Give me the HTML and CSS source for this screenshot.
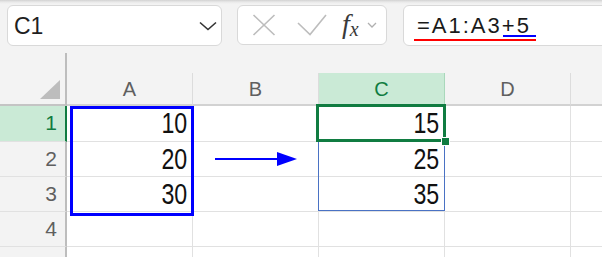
FILE: index.html
```html
<!DOCTYPE html>
<html>
<head>
<meta charset="utf-8">
<link rel="stylesheet" href="styles.css">
</head>
<body>
<div class="toolbar">
  <div class="namebox">
    <span class="name">C1</span>
    <svg class="chev" width="18" height="10" viewBox="0 0 18 10"><path d="M1 1.5 L9 8.5 L17 1.5" fill="none" stroke="#333" stroke-width="1.6"/></svg>
  </div>
  <div class="fxbox">
    <svg class="icon-x" width="24" height="22" viewBox="0 0 24 22"><path d="M1.5 1 L22.5 21 M22.5 1 L1.5 21" stroke="#bdbdbd" stroke-width="1.6" fill="none"/></svg>
    <svg class="icon-check" width="30" height="22" viewBox="0 0 30 22"><path d="M1 9 L13 20.5 L29 1" stroke="#bdbdbd" stroke-width="1.6" fill="none"/></svg>
    <span class="fx"><i>f</i><i class="sub">x</i></span>
    <svg class="chev-small" width="10" height="6" viewBox="0 0 10 6"><path d="M1 1 L5 5 L9 1" fill="none" stroke="#b0b0b0" stroke-width="1.3"/></svg>
  </div>
  <div class="formula">
    <span class="ftext">=A1:A3+5</span>
    <div class="uline red"></div>
    <div class="uline blue"></div>
  </div>
</div>
<div class="sheet">
  <div class="rh spacer"></div>
  <div class="gap"></div>

  <div class="corner"><div class="tri"></div></div>
  <div class="ch">A</div>
  <div class="ch">B</div>
  <div class="ch sel">C</div>
  <div class="ch">D</div>
  <div class="ch last"></div>

  <div class="rh sel">1</div>
  <div class="cell"><span class="num">10</span></div>
  <div class="cell"></div>
  <div class="cell"><span class="num">15</span></div>
  <div class="cell"></div>
  <div class="cell last"></div>

  <div class="rh">2</div>
  <div class="cell"><span class="num">20</span></div>
  <div class="cell"></div>
  <div class="cell"><span class="num">25</span></div>
  <div class="cell"></div>
  <div class="cell last"></div>

  <div class="rh">3</div>
  <div class="cell"><span class="num">30</span></div>
  <div class="cell"></div>
  <div class="cell"><span class="num">35</span></div>
  <div class="cell"></div>
  <div class="cell last"></div>

  <div class="rh">4</div>
  <div class="cell"></div>
  <div class="cell"></div>
  <div class="cell"></div>
  <div class="cell"></div>
  <div class="cell last"></div>

  <div class="rh">5</div>
  <div class="cell"></div>
  <div class="cell"></div>
  <div class="cell"></div>
  <div class="cell"></div>
  <div class="cell last"></div>

  <div class="range-a"></div>
  <div class="range-c"></div>
  <div class="selection"></div>
  <div class="handle"></div>
  <svg class="arrow" width="90" height="20" viewBox="0 0 90 20"><path d="M0 8 L64 8" stroke="#0000ff" stroke-width="2.2"/><path d="M62 1 L82 8 L62 15 Z" fill="#0000ff"/></svg>
</div>
</body>
</html>
```
FILE: styles.css
```css
* { box-sizing: border-box; }
html, body { margin: 0; padding: 0; }
body {
  background: #f3f3f3;
  width: 602px;
  height: 257px;
  overflow: hidden;
  font-family: "Liberation Sans", Arial, sans-serif;
}
.toolbar {
  height: 53px;
  display: flex;
  align-items: flex-start;
  padding: 5px 0 0 7px;
  gap: 15px;
  overflow: hidden;
  background: linear-gradient(#d2d2d2 0px, #e9e9e9 2px, #f3f3f3 4px);
}
.namebox {
  width: 215px;
  height: 41px;
  background: #fff;
  border: 1px solid #d9d9d9;
  border-radius: 6px;
  display: flex;
  align-items: center;
  justify-content: space-between;
  padding: 0 4px 0 6px;
}
.name {
  font-size: 23px;
  color: #1f1f1f;
  padding-top: 1px;
}
.chev { margin-top: 1px; }
.fxbox {
  width: 150px;
  height: 40px;
  background: #fff;
  border: 1px solid #d9d9d9;
  border-radius: 6px;
  display: flex;
  align-items: center;
  padding: 0 0 0 14px;
}
.icon-check { margin-left: 21px; margin-top: -1px; }
.fx {
  margin-left: 15px;
  font-family: "Liberation Serif", serif;
  font-size: 28px;
  color: #3a3a3a;
  display: flex;
  align-items: baseline;
  margin-top: -3px;
}
.fx .sub { font-size: 20px; margin-left: 0; position: relative; top: 3px; }
.chev-small { margin-left: 8px; margin-top: 0; }
.formula {
  position: relative;
  flex: 1;
  height: 41px;
  margin-left: 1px;
  margin-right: -12px;
  background: #fff;
  border: 1px solid #d9d9d9;
  border-radius: 6px;
  padding: 7px 0 0 13px;
}
.ftext {
  font-size: 22px;
  letter-spacing: 2px;
  color: #1a1a1a;
  line-height: 25px;
}
.uline { position: absolute; height: 2px; }
.uline.red { background: #ff0000; left: 10px; width: 122px; top: 33px; }
.uline.blue { background: #0000ff; left: 99px; width: 33px; top: 29px; }

.sheet {
  position: relative;
  display: grid;
  grid-template-columns: 67px 126px 126px 126px 126px 1fr;
  grid-template-rows: 20px 33px 36px 35px 35px 35px 35px;
}
.gap { grid-column: 2 / 7; }
.rh {
  background: #f3f3f3;
  border-right: 2px solid #bdbdbd;
  border-bottom: 1px solid #e1e1e1;
  color: #5f5f5f;
  font-size: 21px;
  text-align: right;
  padding: 5px 8px 0 0;
}
.rh.spacer { border-bottom: none; }
.rh.sel {
  background: #caead6;
  border-right-color: #107c41;
  color: #107c41;
}
.corner {
  background: #f3f3f3;
  border-right: 2px solid #bdbdbd;
  border-bottom: 2px solid #c4c4c4;
  display: flex;
  align-items: flex-end;
  justify-content: flex-end;
  padding: 0 5px 5px 0;
}
.tri {
  width: 20px;
  height: 19px;
  background: #bdbdbd;
  clip-path: polygon(100% 0, 100% 100%, 0 100%);
}
.ch {
  background: #f3f3f3;
  border-right: 1px solid #dcdcdc;
  border-bottom: 2px solid #d2d2d2;
  color: #5f5f5f;
  font-size: 20px;
  text-align: center;
  padding-top: 5px;
}
.ch.sel {
  background: #caead6;
  color: #107c41;
  border-right-color: #a9d8bb;
}
.ch.last, .cell.last { border-right: none; }
.cell {
  background: #fff;
  border-right: 1px solid #e1e1e1;
  border-bottom: 1px solid #e1e1e1;
  font-family: "Liberation Sans", Arial, sans-serif;
  font-size: 29px;
  color: #111;
  text-align: right;
  padding-right: 5px;
  line-height: 34px;
}
.num {
  display: inline-block;
  transform: scaleX(0.8);
  transform-origin: right center;
}
.range-a {
  position: absolute;
  left: 70px;
  top: 53px;
  width: 124px;
  height: 110px;
  border: 3px solid #0000ff;
}
.range-c {
  position: absolute;
  left: 318px;
  top: 53px;
  width: 127px;
  height: 105px;
  border: 1px solid #4a72c4;
}
.selection {
  position: absolute;
  left: 316px;
  top: 51px;
  width: 130px;
  height: 38px;
  border: 3px solid #107c41;
}
.handle {
  position: absolute;
  left: 441px;
  top: 84px;
  width: 9px;
  height: 9px;
  background: #107c41;
  border: 1px solid #fff;
}
.arrow {
  position: absolute;
  left: 215px;
  top: 98px;
}
```
